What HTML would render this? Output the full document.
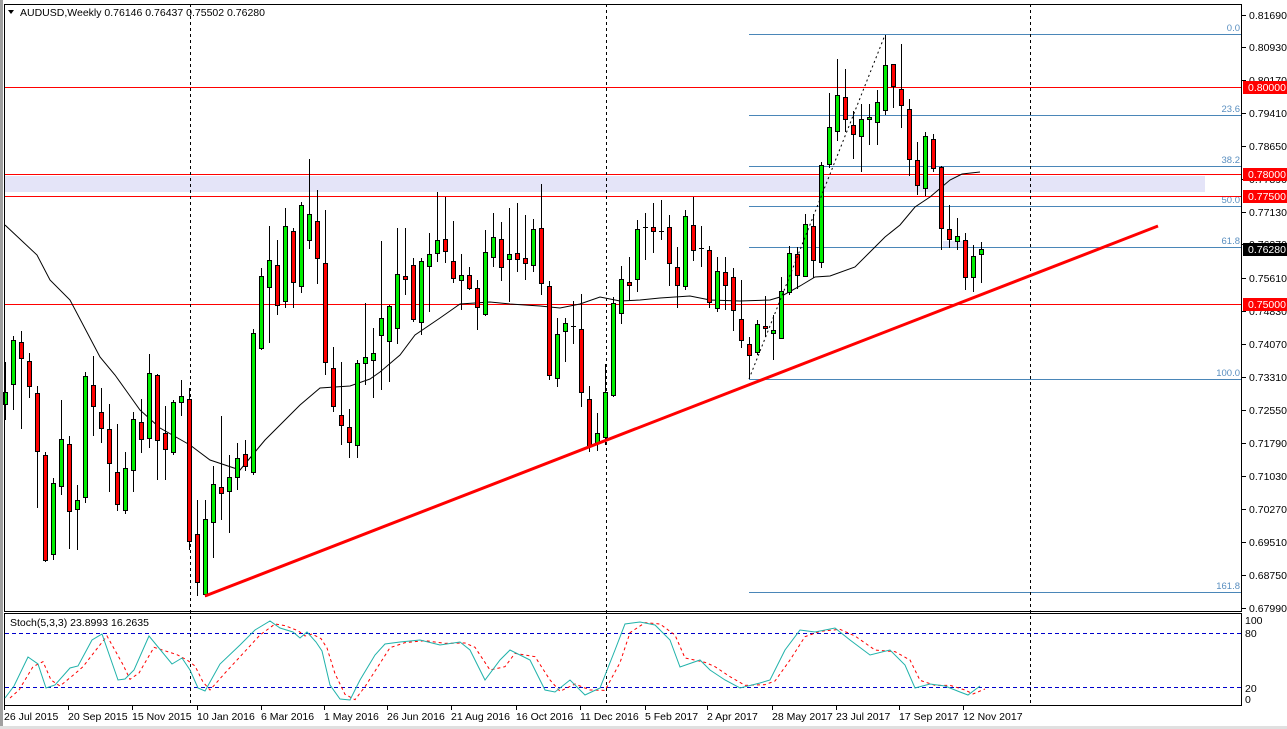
<!DOCTYPE html>
<html><head><meta charset="utf-8"><style>
html,body{margin:0;padding:0;background:#fff;width:1287px;height:729px;overflow:hidden}
svg{display:block;font-family:"Liberation Sans",sans-serif;font-size:10.5px}
</style></head><body>
<svg id="s" width="1287" height="729" xmlns="http://www.w3.org/2000/svg">
<rect x="0" y="0" width="1287" height="729" fill="#fff"/>
<rect x="0" y="0" width="3" height="729" fill="#a0a0a0"/>
<rect x="0" y="726" width="1287" height="3" fill="#e0e0e0"/>
<g id="g"></g>
</svg>
<script>
var NS="http://www.w3.org/2000/svg",g=document.getElementById('g');
function el(t,a,txt){var e=document.createElementNS(NS,t);for(var k in a)e.setAttribute(k,a[k]);if(txt!=null)e.textContent=txt;g.appendChild(e);return e;}
el('rect',{x:5,y:176,width:1200,height:16,fill:'#e4e4f8'});
el('rect',{x:943,y:241,width:26,height:7,fill:'#e4e4f8'});
var fib=[[34,'0.0'],[115,'23.6'],[166,'38.2'],[206,'50.0'],[247,'61.8'],[379,'100.0'],[592,'161.8']];
fib.forEach(function(f){el('line',{x1:749,y1:f[0]+.5,x2:1242,y2:f[0]+.5,stroke:'#4a86b8','stroke-width':1});
el('text',{x:1240,y:f[0]-3,'text-anchor':'end',fill:'#5a8fc0','font-size':'9.5'},f[1]);});
[87,174,196,304].forEach(function(y){el('line',{x1:4,y1:y+.5,x2:1242,y2:y+.5,stroke:'#ff0000','stroke-width':1});});
[190,606,1030].forEach(function(x){el('line',{x1:x+.5,y1:4,x2:x+.5,y2:706,stroke:'#000','stroke-dasharray':'3,3','stroke-width':1});});
var ma=[[5,225],[37,255],[50,280],[70,300],[100,357],[115,375],[140,410],[160,428],[190,445],[210,460],[240,470],[250,458],[265,440],[280,425],[300,405],[320,388],[350,386],[370,379],[380,372],[400,355],[415,335],[440,318],[460,304],[490,302],[510,304],[540,306],[560,308],[580,304],[600,297],[620,301],[640,300],[660,298],[690,296],[710,300],[740,301],[770,300],[780,297],[800,286],[815,277],[830,276],[855,267],[870,252],[885,237],[900,225],[915,207],[930,197],[950,180],[962,174],[980,172]];
el('polyline',{points:ma.map(function(p){return p.join(',')}).join(' '),fill:'none',stroke:'#000','stroke-width':1});
var C=[[404,392,362,420],[384,340,336,410],[342,358,331,429],[361,386,353,398],[393,451,386,508],[455,560,452,562],[554,483,478,560],[486,439,400,495],[444,511,436,549],[509,500,485,550],[497,376,372,503],[385,406,356,436],[412,428,388,443],[429,463,404,492],[472,504,424,511],[510,468,452,514],[470,419,412,492],[422,439,399,453],[438,373,354,448],[375,440,374,480],[433,449,406,480],[452,402,400,455],[402,396,380,416],[399,541,388,550],[534,582,500,596],[594,519,500,597],[522,484,466,558],[487,493,416,520],[491,477,455,533],[477,458,443,490],[454,466,440,471],[472,333,329,475],[348,276,268,350],[287,260,226,343],[265,305,240,315],[301,226,208,308],[231,282,228,308],[286,205,202,293],[240,214,159,249],[221,258,190,284],
[263,362,210,375],[368,406,347,412],[415,425,362,445],[427,442,409,458],[445,363,360,458],[363,357,303,385],[360,353,328,398],[335,318,241,390],[341,306,305,382],[328,274,228,344],[276,279,228,295],[265,319,258,322],[322,261,258,335],[266,254,233,312],[253,240,192,262],[239,251,197,263],[261,278,221,283],[280,275,254,310],[275,288,267,290],[288,307,280,330],[314,252,230,316],[257,237,213,267],[239,267,222,281],[259,254,208,302],[253,259,203,272],[258,263,215,280],[265,229,219,272],[228,283,184,295],[286,375,281,380],[378,334,318,387],[331,323,318,362],[326,326,301,344],[329,392,294,407],[399,446,386,452],[443,433,413,451],[437,392,364,445],[395,303,297,397],[313,279,266,324],
[282,285,257,300],[279,229,220,292],[227,227,213,260],[227,231,203,253],[231,231,200,240],[227,263,215,286],[267,285,247,308],[286,216,210,290],[225,250,197,261],[248,248,226,267],[250,302,246,308],[308,271,257,312],[272,285,257,310],[277,310,268,331],[319,340,280,348],[344,355,337,379],[352,324,320,355],[326,328,296,337],[333,330,315,360],[338,291,277,338],[292,253,246,295],[254,275,247,289],[276,224,214,277],[226,260,214,278],
[262,165,162,268],[164,127,93,168],[131,95,59,141],[97,119,69,132],[125,134,111,159],[136,119,104,172],[119,117,104,145],[122,102,90,145],[110,65,35,115],[64,86,64,108],[89,105,44,128],[109,159,99,176],[160,185,142,195],[188,136,132,196],[139,168,134,172],[167,228,166,250],[229,239,205,248],[241,236,218,250],[240,277,233,290],[277,256,245,292],[254,249,242,283]];
C.forEach(function(c,i){var x=5+8*i,o=c[0],cl=c[1];
el('line',{x1:x+.5,y1:c[2],x2:x+.5,y2:c[3],stroke:'#000','stroke-width':1});
var t=Math.min(o,cl),b=Math.max(o,cl);
if(b-t<1){el('line',{x1:x-2,y1:t+.5,x2:x+3,y2:t+.5,stroke:'#000'});}
else el('rect',{x:x-2+.5,y:t+.5,width:4,height:b-t,fill:cl<o?'#00ee00':'#ff0000',stroke:'#000','stroke-width':1});});
el('line',{x1:205,y1:596,x2:1158,y2:226,stroke:'#ff0000','stroke-width':3});
el('line',{x1:749,y1:379,x2:885,y2:35,stroke:'#000','stroke-dasharray':'2,3','stroke-width':1});
el('rect',{x:4.5,y:4.5,width:1237,height:607,fill:'none',stroke:'#000'});
el('rect',{x:4.5,y:613.5,width:1237,height:92,fill:'none',stroke:'#000'});
el('path',{d:'M8 10 L14 10 L11 14 Z',fill:'#000'});
el('text',{x:20,y:16,fill:'#000','font-size':'10.5'},'AUDUSD,Weekly  0.76146 0.76437 0.75502 0.76280');
var pl=[['0.81690',15],['0.80930',47],['0.80170',80],['0.79410',113],['0.78650',146],['0.77890',179],['0.77130',212],['0.76370',244],['0.75610',278],['0.74830',311],['0.74070',344],['0.73310',377],['0.72550',410],['0.71790',443],['0.71030',476],['0.70270',509],['0.69510',542],['0.68750',575],['0.67990',608]];
pl.forEach(function(p){el('line',{x1:1242,y1:p[1]+.5,x2:1246,y2:p[1]+.5,stroke:'#000'});el('text',{x:1249,y:p[1]+4,fill:'#000'},p[0]);});
[['0.80000',87,'#ff0000'],['0.78000',174,'#ff0000'],['0.77500',196,'#ff0000'],['0.76280',249,'#000'],['0.75000',304,'#ff0000']].forEach(function(p){
el('rect',{x:1243,y:p[1]-6,width:44,height:13,fill:p[2]});el('text',{x:1248,y:p[1]+4,fill:'#fff'},p[0]);});
el('line',{x1:5,y1:633.5,x2:1242,y2:633.5,stroke:'#0000cc','stroke-dasharray':'4,3'});
el('line',{x1:5,y1:687.5,x2:1242,y2:687.5,stroke:'#0000cc','stroke-dasharray':'4,3'});
[['100',624],['80',637],['20',692],['0',703]].forEach(function(p){el('text',{x:1245,y:p[1],fill:'#000'},p[0]);});
el('text',{x:10,y:626,fill:'#000'},'Stoch(5,3,3) 23.8993 16.2635');
var K=[[5,698],[14,686],[28,657],[38,664],[46,688],[55,685],[70,668],[78,666],[92,640],[102,634],[118,680],[125,679],[134,670],[149,636],[172,664],[182,658],[190,670],[198,688],[205,691],[220,664],[240,645],[255,630],[270,621],[280,628],[293,632],[300,638],[307,632],[316,642],[322,651],[330,685],[340,699],[350,700],[360,680],[375,655],[385,644],[400,642],[420,640],[440,645],[460,642],[470,650],[485,680],[500,660],[510,650],[530,660],[545,690],[555,692],[570,680],[585,695],[600,688],[615,650],[625,624],[640,622],[655,625],[670,640],[680,667],[700,660],[710,670],[725,680],[740,688],[760,683],[770,680],[785,650],[800,630],[815,632],[835,628],[850,640],[870,655],[890,650],[905,665],[915,688],[930,684],[945,686],[960,692],[968,695],[980,686]];
var D=K.map(function(p,i){var a=K[Math.max(0,i-1)];return [p[0]+5,(p[1]*2+a[1])/3];});
el('polyline',{points:D.map(function(p){return p.join(',')}).join(' '),fill:'none',stroke:'#ff0000','stroke-dasharray':'3,3'});
el('polyline',{points:K.map(function(p){return p.join(',')}).join(' '),fill:'none',stroke:'#20b2aa'});
[['26 Jul 2015',4],['20 Sep 2015',68],['15 Nov 2015',132],['10 Jan 2016',197],['6 Mar 2016',261],['1 May 2016',324],['26 Jun 2016',387],['21 Aug 2016',451],['16 Oct 2016',516],['11 Dec 2016',580],['5 Feb 2017',645],['2 Apr 2017',707],['28 May 2017',772],['23 Jul 2017',836],['17 Sep 2017',899],['12 Nov 2017',963]].forEach(function(d){
el('line',{x1:d[1]+.5,y1:706,x2:d[1]+.5,y2:710,stroke:'#000'});el('text',{x:d[1],y:720,fill:'#000'},d[0]);});
</script>
</body></html>
